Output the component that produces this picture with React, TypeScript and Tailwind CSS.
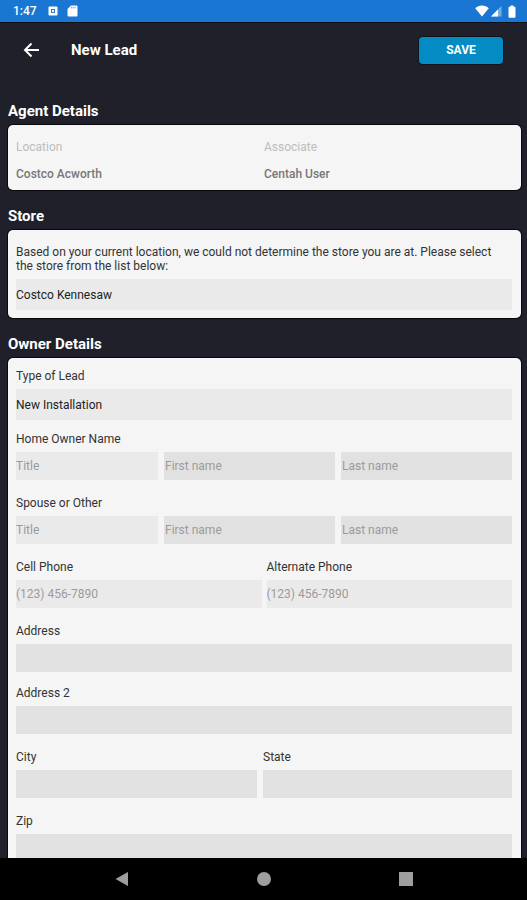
import type { ReactNode } from "react";

function Section({ title, className, children }: { title: string; className: string; children: ReactNode }) {
  return (
    <section className="mt-4">
      <h2 className="mb-1 text-[15px] leading-5 font-bold text-white">{title}</h2>
      <div className={`rounded-[5px] bg-[#f5f5f5] pr-[9px] pl-2 shadow-[0_0_0_1px_#08080d] ${className}`}>{children}</div>
    </section>
  );
}

type FieldProps = { id: string; label: string; placeholder?: string; light?: boolean };

const label = "block text-xs leading-4 text-[#333333]";

function Box({ id, name, placeholder, light }: { id: string; name: string; placeholder?: string; light?: boolean }) {
  return (
    <input
      id={id}
      type="text"
      aria-label={name}
      placeholder={placeholder}
      className={`block h-7 w-full min-w-0 text-xs text-[#333333] outline-none placeholder:text-[#9b9b9b] ${light ? "bg-[#eaeaea]" : "bg-[#e1e1e1] pl-px"}`}
    />
  );
}

function Field({ id, label: text, placeholder, light }: FieldProps) {
  return (
    <div>
      <label htmlFor={id} className={`mb-[5px] ${label}`}>{text}</label>
      <Box id={id} name={text} placeholder={placeholder} light={light} />
    </div>
  );
}

function NameRow({ legend, prefix }: { legend: string; prefix: string }) {
  return (
    <fieldset className="mb-[15px]">
      <legend className={`mb-[5px] ${label}`}>{legend}</legend>
      <div className="grid grid-cols-[142fr_171fr_171fr] gap-1.5">
        <Box id={`${prefix}-title`} name={`${legend} title`} placeholder="Title" light />
        <Box id={`${prefix}-first`} name={`${legend} first name`} placeholder="First name" />
        <Box id={`${prefix}-last`} name={`${legend} last name`} placeholder="Last name" />
      </div>
    </fieldset>
  );
}

const select = "block h-[31px] w-full appearance-none bg-[#eaeaea] text-xs text-[#222222] outline-none";

function StatusBar() {
  return (
    <div className="flex h-[22px] shrink-0 items-center bg-[#1976d2] pr-[11px] pl-[13px] text-white">
      <span className="text-xs leading-4 font-medium">1:47</span>
      <svg className="ml-[11px]" width="10" height="10" viewBox="0 0 10 10" fill="currentColor">
        <path fillRule="evenodd" d="M1.5 0.5h7a1 1 0 0 1 1 1v7a1 1 0 0 1-1 1h-7a1 1 0 0 1-1-1v-7a1 1 0 0 1 1-1zM3 3v4h4V3z" />
        <circle cx="5" cy="5" r="1.2" />
      </svg>
      <svg className="ml-[9px]" width="11" height="12" viewBox="0 0 11 12" fill="currentColor">
        <path d="M4 0.5h5.5a1 1 0 0 1 1 1v9a1 1 0 0 1-1 1h-8a1 1 0 0 1-1-1V4z" />
        <path d="M4.3 1.8v1.6M6.2 1.8v1.6M8.1 1.8v1.6" stroke="#1976d2" strokeWidth="0.7" />
      </svg>
      <div className="ml-auto flex items-center">
        <svg width="14" height="12" viewBox="0 0 14 12" fill="currentColor">
          <path d="M7 11.5 0.2 3.2C2.2 1.4 4.5 0.6 7 0.6s4.8 0.8 6.8 2.6z" />
        </svg>
        <svg className="ml-0.5" width="11" height="12" viewBox="0 0 11 12" fill="currentColor">
          <path d="M10.5 0.8v10.7H0z" opacity="0.4" />
          <path d="M7 4.4v7.1H0z" />
        </svg>
        <svg className="ml-1.5" width="8" height="13" viewBox="0 0 8 13" fill="currentColor">
          <path d="M2.5 0.5h3v1.2h1a1 1 0 0 1 1 1v9a1 1 0 0 1-1 1h-5a1 1 0 0 1-1-1v-9a1 1 0 0 1 1-1h1z" />
        </svg>
      </div>
    </div>
  );
}

export default function App() {
  return (
    <div className="flex h-screen flex-col overflow-hidden bg-[#20202a] font-[Roboto,sans-serif]">
      <StatusBar />
      <header className="flex h-[55px] shrink-0 items-center border-t border-[#0b1018] pr-6 pl-[23px]">
        <button type="button" aria-label="Back" className="text-white">
          <svg width="17" height="16" viewBox="0 0 17 16" fill="none" stroke="currentColor" strokeWidth="2">
            <path d="M16 8H2.5M8.5 1.5 2 8l6.5 6.5" />
          </svg>
        </button>
        <h1 className="ml-[31px] text-[15px] leading-5 font-bold text-white">New Lead</h1>
        <button type="button" className="ml-auto h-[27px] w-[84px] rounded-[4px] bg-[#058bc4] text-xs font-bold text-white shadow-[0_0_0_1px_#12141b]">
          SAVE
        </button>
      </header>

      <main className="min-h-0 flex-1 overflow-hidden pt-2 pr-1.5 pl-2">
        <Section title="Agent Details" className="pt-3.5 pb-2">
          <dl className="grid grid-cols-2 text-xs leading-4">
            <div>
              <dt className="mb-[11px] text-[#bdbdbd]">Location</dt>
              <dd className="font-medium text-[#777777]">Costco Acworth</dd>
            </div>
            <div>
              <dt className="mb-[11px] text-[#bdbdbd]">Associate</dt>
              <dd className="font-medium text-[#777777]">Centah User</dd>
            </div>
          </dl>
        </Section>

        <Section title="Store" className="pt-[15px] pb-2">
          <label htmlFor="store" className="mb-1.5 block pr-3 text-xs leading-[14px] text-[#333333]">
            Based on your current location, we could not determine the store you are at. Please select the store from the list below:
          </label>
          <select id="store" className={select}>
            <option>Costco Kennesaw</option>
          </select>
        </Section>

        <Section title="Owner Details" className="pt-2.5 pb-4">
          <label htmlFor="lead-type" className={`mb-[5px] ${label}`}>Type of Lead</label>
          <select id="lead-type" className={`mb-[11px] ${select}`}>
            <option>New Installation</option>
          </select>
          <NameRow legend="Home Owner Name" prefix="owner" />
          <NameRow legend="Spouse or Other" prefix="spouse" />
          <div className="mb-[15px] grid grid-cols-2 gap-[5px]">
            <Field id="cell" label="Cell Phone" placeholder="(123) 456-7890" light />
            <Field id="alternate" label="Alternate Phone" placeholder="(123) 456-7890" light />
          </div>
          <div className="mb-[13px]">
            <Field id="address" label="Address" />
          </div>
          <div className="mb-[15px]">
            <Field id="address2" label="Address 2" />
          </div>
          <div className="mb-[15px] grid grid-cols-[241fr_249fr] gap-1.5">
            <Field id="city" label="City" />
            <Field id="state" label="State" />
          </div>
          <Field id="zip" label="Zip" />
        </Section>
      </main>

      <nav className="grid h-[42px] shrink-0 grid-cols-[1fr_142px_142px_142px_1fr] items-center bg-black text-[#9e9e9e]">
        <button type="button" aria-label="System back" className="col-start-2 flex justify-center">
          <svg width="14" height="16" viewBox="0 0 14 16" fill="currentColor"><path d="M13 1v14L0.5 8z" /></svg>
        </button>
        <button type="button" aria-label="Home" className="flex justify-center">
          <svg width="14" height="14" viewBox="0 0 14 14" fill="currentColor"><circle cx="7" cy="7" r="7" /></svg>
        </button>
        <button type="button" aria-label="Recent apps" className="flex justify-center">
          <svg width="14" height="14" viewBox="0 0 14 14" fill="currentColor"><path d="M0 0h14v14H0z" /></svg>
        </button>
      </nav>
    </div>
  );
}
